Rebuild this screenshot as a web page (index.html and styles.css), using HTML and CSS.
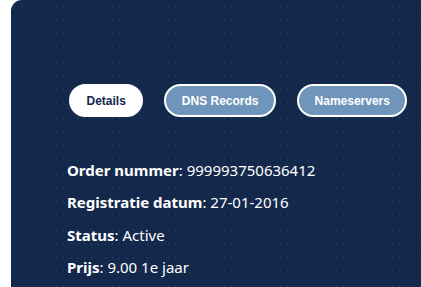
FILE: index.html
```html
<!DOCTYPE html>
<html lang="nl">
<head>
  <meta charset="UTF-8">
  <meta name="viewport" content="width=device-width, initial-scale=1.0">
  <title>Domein details</title>
  <link rel="stylesheet" href="styles.css">
</head>
<body>
  <div class="card">
    <div class="tabs">
      <button class="tab active">Details</button>
      <button class="tab">DNS Records</button>
      <button class="tab">Nameservers</button>
    </div>

    <div class="details">
      <p><strong>Order nummer</strong>: 999993750636412</p>
      <p><strong>Registratie datum</strong>: 27-01-2016</p>
      <p><strong>Status</strong>: Active</p>
      <p><strong>Prijs</strong>: 9.00 1e jaar</p>
    </div>
  </div>
</body>
</html>
```

FILE: styles.css
```css
body {
  margin: 0;
  padding: 0;
  background-color: #fff;
  font-family: 'Noto Sans', 'Open Sans', sans-serif;
  overflow: hidden;
}

.card {
  margin-left: 11px;
  height: 287px;
  box-sizing: border-box;
  background-color: #13284b;
  background-image: radial-gradient(circle, rgba(120, 150, 200, 0.18) 0.7px, transparent 1px);
  background-size: 7px 14px;
  background-position: 0 -1px;
  border-top-left-radius: 11px;
  padding: 84px 0 0 58px;
  color: #fff;
}

.tabs {
  display: flex;
  gap: 21px;
}

.tab {
  height: 33px;
  padding: 0 15.5px;
  font-family: 'Liberation Sans', Arial, sans-serif;
  font-size: 12px;
  font-weight: bold;
  color: #fff;
  background: #7095bb;
  border: 2px solid #fff;
  border-radius: 17px;
  cursor: pointer;
}

.tab.active {
  background: #fff;
  color: #13284b;
}

.details {
  margin-top: 43px;
  margin-left: -2px;
}

.details p {
  margin: 0 0 11px;
  font-size: 15px;
  line-height: 21.3px;
}

.details strong {
  font-weight: bold;
}
```
